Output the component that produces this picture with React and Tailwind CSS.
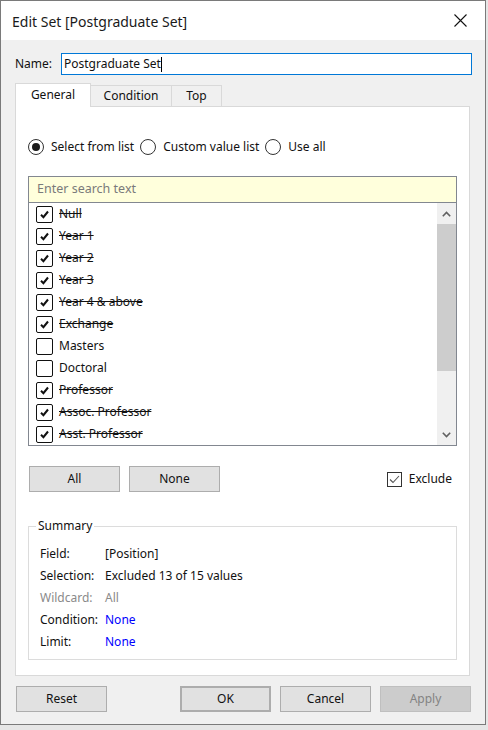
import React from "react";

const items = [
  { label: "Null", on: true },
  { label: "Year 1", on: true },
  { label: "Year 2", on: true },
  { label: "Year 3", on: true },
  { label: "Year 4 & above", on: true },
  { label: "Exchange", on: true },
  { label: "Masters", on: false },
  { label: "Doctoral", on: false },
  { label: "Professor", on: true },
  { label: "Assoc. Professor", on: true },
  { label: "Asst. Professor", on: true },
];

const summary = [
  { k: "Field:", v: "[Position]" },
  { k: "Selection:", v: "Excluded 13 of 15 values" },
  { k: "Wildcard:", v: "All", dim: true },
  { k: "Condition:", v: "None", link: true },
  { k: "Limit:", v: "None", link: true },
];

const Radio = ({ checked, label }) => (
  <label className="flex items-center gap-[7px]">
    <span className="w-[16px] h-[16px] rounded-full border border-[#333] bg-white flex items-center justify-center">
      {checked && <span className="w-[8px] h-[8px] rounded-full bg-[#1a1a1a]" />}
    </span>
    <span>{label}</span>
  </label>
);

const Check = ({ on }) => (
  <span className="w-[17px] h-[17px] border border-[#111] rounded-[2px] bg-white flex items-center justify-center">
    {on && (
      <svg width="11" height="11" viewBox="0 0 11 11">
        <path d="M2 5.8 L4.4 8.2 L9 2.5" fill="none" stroke="#111" strokeWidth="2" />
      </svg>
    )}
  </span>
);

const Btn = ({ children, className = "" }) => (
  <button className={`w-[91px] h-[26px] border border-[#adadad] bg-[#e1e1e1] text-[#111] ${className}`}>
    {children}
  </button>
);

export default function App() {
  return (
    <div
      className="w-[488px] h-[730px] bg-[#e6e6e6] overflow-hidden text-[12px] text-[#111]"
      style={{ fontFamily: '"Noto Sans", "Open Sans", sans-serif' }}
    >
      <div className="w-[486px] h-[725px] border border-[#7a7a7a] bg-[#f0f0f0] flex flex-col">
        {/* title bar */}
        <div className="h-[39px] bg-white flex items-center justify-between pl-[11px] pr-[18px] shrink-0">
          <span className="text-[14px] text-[#1a1a1a] pt-[2px]">Edit Set [Postgraduate Set]</span>
          <svg width="13" height="13" viewBox="0 0 13 13">
            <path d="M0.5 0.5 L12.5 12.5 M12.5 0.5 L0.5 12.5" stroke="#111" strokeWidth="1.1" />
          </svg>
        </div>

        {/* name */}
        <div className="flex items-center mt-[13px] pl-[14px] h-[22px]">
          <span className="w-[46px]">Name:</span>
          <div className="w-[411px] h-[22px] border border-[#0078d7] bg-white flex items-center px-[2px]">
            Postgraduate Set<span className="w-px h-[15px] bg-black" />
          </div>
        </div>

        {/* tabs */}
        <div className="flex items-end pl-[14px] mt-[8px] h-[23px]">
          <div className="w-[76px] h-[24px] bg-white border border-b-0 border-[#d9d9d9] flex items-center justify-center pb-[2px] relative z-10 -mb-px">
            General
          </div>
          <div className="w-[81px] h-[21px] border border-l-0 border-b-0 border-[#d9d9d9] flex items-center justify-center">
            Condition
          </div>
          <div className="w-[50px] h-[21px] border border-l-0 border-b-0 border-[#d9d9d9] flex items-center justify-center">
            Top
          </div>
        </div>

        {/* panel */}
        <div className="ml-[14px] w-[455px] h-[570px] bg-white border border-[#d9d9d9] px-[12px] flex flex-col">
          <div className="flex items-center gap-[6px] mt-[32px] h-[16px]">
            <Radio checked label="Select from list" />
            <Radio label="Custom value list" />
            <Radio label="Use all" />
          </div>

          {/* list */}
          <div className="mt-[21px] w-[429px] h-[270px] border border-[#828790] flex flex-col">
            <div className="h-[26px] bg-[#ffffdc] border-b border-[#828790] flex items-center pl-[8px] text-[#7a7a7a] text-[12.5px]">
              Enter search text
            </div>
            <div className="flex flex-1">
              <div className="flex-1 flex flex-col pl-[7px]">
                {items.map((it) => (
                  <div key={it.label} className="h-[22px] flex items-center gap-[6px]">
                    <Check on={it.on} />
                    <span className={it.on ? "line-through decoration-[#111]" : ""}>{it.label}</span>
                  </div>
                ))}
              </div>
              <div className="w-[19px] bg-[#f0f0f0] flex flex-col">
                <div className="h-[21px] flex items-center justify-center">
                  <svg width="9" height="6" viewBox="0 0 9 6">
                    <path d="M0.8 5.2 L4.5 1.5 L8.2 5.2" fill="none" stroke="#606060" strokeWidth="1.6" />
                  </svg>
                </div>
                <div className="h-[147px] bg-[#cdcdcd]" />
                <div className="flex-1" />
                <div className="h-[21px] flex items-center justify-center">
                  <svg width="9" height="6" viewBox="0 0 9 6">
                    <path d="M0.8 0.8 L4.5 4.5 L8.2 0.8" fill="none" stroke="#606060" strokeWidth="1.6" />
                  </svg>
                </div>
              </div>
            </div>
          </div>

          {/* all / none / exclude */}
          <div className="mt-[20px] flex items-center pl-[1px]">
            <Btn>All</Btn>
            <Btn className="ml-[9px]">None</Btn>
            <label className="ml-auto mr-[5px] flex items-center gap-[7px]">
              <span className="w-[15px] h-[15px] border border-[#333] flex items-center justify-center">
                <svg width="11" height="9" viewBox="0 0 11 9">
                  <path d="M1 4.5 L4 7.5 L10 1" fill="none" stroke="#555" strokeWidth="1.1" />
                </svg>
              </span>
              <span>Exclude</span>
            </label>
          </div>

          {/* summary */}
          <fieldset className="mt-[25px] w-[429px] h-[143px] border border-[#dcdcdc] pl-[11px] pt-[8px]">
            <legend className="px-[2px] -ml-[4px]">Summary</legend>
            <div className="flex flex-col">
              {summary.map((r) => (
                <div key={r.k} className={`h-[22px] flex items-center ${r.dim ? "text-[#8a8a8a]" : ""}`}>
                  <span className="w-[65px]">{r.k}</span>
                  <span className={r.link ? "text-[#0000ff]" : ""}>{r.v}</span>
                </div>
              ))}
            </div>
          </fieldset>
        </div>

        {/* bottom buttons */}
        <div className="flex items-center mt-[10px] pl-[15px]">
          <Btn>Reset</Btn>
          <Btn className="ml-[73px] border-2 border-[#0078d7]">OK</Btn>
          <Btn className="ml-[9px]">Cancel</Btn>
          <button className="ml-[9px] w-[91px] h-[26px] border border-[#bfbfbf] bg-[#cccccc] text-[#838383]">
            Apply
          </button>
        </div>
      </div>
    </div>
  );
}
